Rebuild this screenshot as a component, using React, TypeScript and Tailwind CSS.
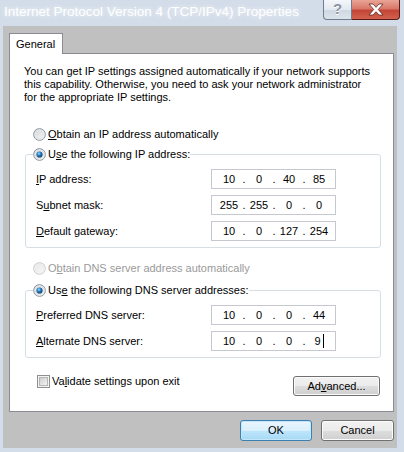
import React from "react";

function Radio({ checked, disabled }: { checked?: boolean; disabled?: boolean }) {
  return (
    <svg width="13" height="13" viewBox="0 0 13 13" className="shrink-0">
      <defs>
        <linearGradient id="rgFill" x1="0" y1="0" x2="1" y2="1">
          <stop offset="0" stopColor="#d2d4d6" />
          <stop offset="1" stopColor="#f8f8f8" />
        </linearGradient>
        <linearGradient id="rgFillD" x1="0" y1="0" x2="1" y2="1">
          <stop offset="0" stopColor="#e6e6e6" />
          <stop offset="1" stopColor="#f8f8f8" />
        </linearGradient>
        <radialGradient id="rgDot" cx="0.4" cy="0.35" r="0.65">
          <stop offset="0" stopColor="#a4dcfb" />
          <stop offset="0.45" stopColor="#2a83c6" />
          <stop offset="1" stopColor="#0e3e69" />
        </radialGradient>
      </defs>
      <circle
        cx="6.5"
        cy="6.5"
        r="5.9"
        fill={disabled ? "url(#rgFillD)" : "url(#rgFill)"}
        stroke={disabled ? "#cfcfcf" : "#8f9aa5"}
        strokeWidth="1"
      />
      <circle cx="6.5" cy="6.5" r="4.4" fill="none" stroke={disabled ? "#efefef" : "#e4e6e8"} strokeWidth="1" />
      {checked && <circle cx="6.5" cy="6.5" r="3.1" fill="url(#rgDot)" />}
    </svg>
  );
}

function Checkbox() {
  return (
    <svg width="13" height="13" viewBox="0 0 13 13" className="shrink-0">
      <defs>
        <linearGradient id="cbFill" x1="0" y1="0" x2="1" y2="1">
          <stop offset="0" stopColor="#cbcbcb" />
          <stop offset="1" stopColor="#f6f6f6" />
        </linearGradient>
      </defs>
      <rect x="0.5" y="0.5" width="12" height="12" fill="#f4f4f4" stroke="#8e8f8f" />
      <rect x="2.5" y="2.5" width="8" height="8" fill="url(#cbFill)" stroke="#b5b5b5" />
    </svg>
  );
}

function U({ children }: { children: React.ReactNode }) {
  return <span className="underline underline-offset-[1px]">{children}</span>;
}

function IpField({ parts, caret }: { parts: string[]; caret?: boolean }) {
  return (
    <div className="flex h-[20px] w-[125px] items-center border border-[#c5c9cf] bg-white pl-[5px] text-[11px] text-black">
      {parts.map((p, i) => (
        <React.Fragment key={i}>
          {i > 0 && <span className="w-[6px] text-center">.</span>}
          <span className="flex w-[24px] items-center justify-center">
            {p}
            {caret && i === 3 && <span className="ml-[2px] inline-block h-[14px] w-px bg-black" />}
          </span>
        </React.Fragment>
      ))}
    </div>
  );
}

function Row({ label, parts, caret }: { label: React.ReactNode; parts: string[]; caret?: boolean }) {
  return (
    <div className="flex h-[20px] items-center pl-[10px]">
      <div className="w-[175px] leading-[13px]">{label}</div>
      <IpField parts={parts} caret={caret} />
    </div>
  );
}

function Btn({ children, def, w }: { children: React.ReactNode; def?: boolean; w: string }) {
  return (
    <div
      className={
        "flex items-center justify-center rounded-[3px] border text-[11px] text-black " +
        w +
        (def
          ? " border-[#3c7fb1] bg-[linear-gradient(to_bottom,#eaf6fd_0%,#d9f0fc_50%,#bee6fd_51%,#a7d9f5_100%)] shadow-[inset_0_0_0_1px_#c5e6f8]"
          : " border-[#707070] bg-[linear-gradient(to_bottom,#f2f2f2_0%,#ebebeb_50%,#dddddd_51%,#cfcfcf_100%)] shadow-[inset_0_0_0_1px_#fbfbfb]")
      }
    >
      {children}
    </div>
  );
}

export default function App() {
  return (
    <div className="flex h-[452px] w-[404px] flex-col overflow-hidden bg-[#d3dde9] font-['Liberation_Sans',Arial,sans-serif] text-[11px] text-black">
      {/* title bar */}
      <div className="flex h-[26px] items-start justify-between">
        <div className="pl-[4px] pt-[3px] text-[13.5px] leading-[18px] text-white [text-shadow:0_0_4px_rgba(255,255,255,0.9)]">
          Internet Protocol Version 4 (TCP/IPv4) Properties
        </div>
        <div className="mr-[4px] flex">
          <div className="flex h-[20px] w-[29px] items-center justify-center rounded-bl-[4px] border border-t-0 border-[#6f7d8e] bg-[linear-gradient(to_bottom,#f4f7fa_0%,#e3e9f0_50%,#cfd8e2_51%,#dbe3ec_100%)] text-[15px] font-bold text-[#8a95a2] [text-shadow:0_1px_0_#ffffff]">
            ?
          </div>
          <div className="flex h-[20px] w-[48px] items-center justify-center rounded-br-[4px] border border-l-0 border-t-0 border-[#5b1a14] bg-[linear-gradient(to_bottom,#e9a597_0%,#d9786a_45%,#c44536_55%,#d2624f_100%)]">
            <svg width="18" height="13" viewBox="0 0 18 13">
              <path
                d="M2 1 L6 1 L9 4.3 L12 1 L16 1 L11.3 6.5 L16 12 L12 12 L9 8.7 L6 12 L2 12 L6.7 6.5 Z"
                fill="#ffffff"
                stroke="#5e2a22"
                strokeWidth="0.8"
                strokeLinejoin="round"
              />
            </svg>
          </div>
        </div>
      </div>

      {/* client area */}
      <div className="ml-[3px] flex h-[422px] w-[394px] flex-col bg-[#c0c0c0] pl-[6px] pt-[7px]">
        {/* tab */}
        <div className="relative z-10 -mb-px flex h-[21px] w-[54px] items-center border border-b-0 border-[#898c95] bg-white pl-[6px] leading-[13px]">
          General
        </div>
        {/* panel */}
        <div className="flex h-[359px] w-[385px] flex-col border border-[#898c95] bg-white pl-[14px] pt-[11px]">
          <p className="leading-[13px]">
            You can get IP settings assigned automatically if your network supports
            <br />
            this capability. Otherwise, you need to ask your network administrator
            <br />
            for the appropriate IP settings.
          </p>

          <div className="ml-[9px] mt-[24px] flex h-[13px] items-center gap-[2px] leading-[13px]">
            <Radio />
            <span>
              <U>O</U>btain an IP address automatically
            </span>
          </div>

          <fieldset className="ml-[1px] mt-[7px] w-[356px] rounded-[3px] border border-[#d5dfe5] pb-[6px]">
            <legend className="ml-[7px] p-0">
              <div className="flex h-[13px] items-center gap-[2px] leading-[13px]">
                <Radio checked />
                <span>
                  U<U>s</U>e the following IP address:
                </span>
              </div>
            </legend>
            <div className="mt-[8px] flex flex-col gap-[6px]">
              <Row label={<><U>I</U>P address:</>} parts={["10", "0", "40", "85"]} />
              <Row label={<>S<U>u</U>bnet mask:</>} parts={["255", "255", "0", "0"]} />
              <Row label={<><U>D</U>efault gateway:</>} parts={["10", "0", "127", "254"]} />
            </div>
          </fieldset>

          <div className="ml-[9px] mt-[14px] flex h-[13px] items-center gap-[2px] leading-[13px] text-[#9a9a9a]">
            <Radio disabled />
            <span>
              O<U>b</U>tain DNS server address automatically
            </span>
          </div>

          <fieldset className="ml-[1px] mt-[9px] w-[356px] rounded-[3px] border border-[#d5dfe5] pb-[6px]">
            <legend className="ml-[7px] p-0">
              <div className="flex h-[13px] items-center gap-[2px] leading-[13px]">
                <Radio checked />
                <span>
                  Us<U>e</U> the following DNS server addresses:
                </span>
              </div>
            </legend>
            <div className="mt-[8px] flex flex-col gap-[6px]">
              <Row label={<><U>P</U>referred DNS server:</>} parts={["10", "0", "0", "44"]} />
              <Row label={<><U>A</U>lternate DNS server:</>} parts={["10", "0", "0", "9"]} caret />
            </div>
          </fieldset>

          <div className="mt-[17px] flex w-[356px] items-start justify-between">
            <div className="ml-[13px] flex h-[13px] items-center gap-[2px] leading-[13px]">
              <Checkbox />
              <span>
                Va<U>l</U>idate settings upon exit
              </span>
            </div>
            <div className="mt-[1px]">
              <Btn w="h-[20px] w-[87px]">
                <span>
                  Ad<U>v</U>anced...
                </span>
              </Btn>
            </div>
          </div>
        </div>

        {/* bottom buttons */}
        <div className="mt-[8px] flex w-[385px] justify-end gap-[9px]">
          <Btn def w="h-[21px] w-[72px]">
            OK
          </Btn>
          <Btn w="h-[21px] w-[73px]">Cancel</Btn>
        </div>
      </div>
    </div>
  );
}
